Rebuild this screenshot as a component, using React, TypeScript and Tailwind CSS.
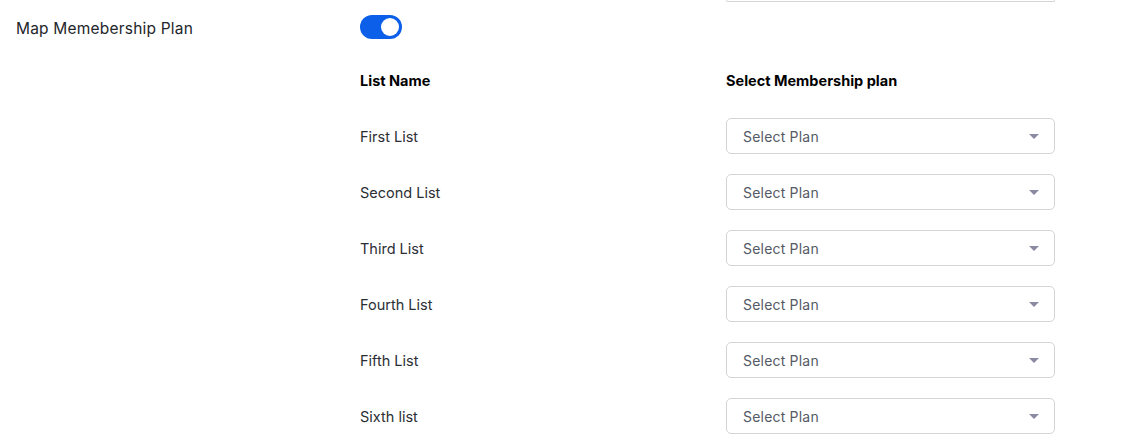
import { useState } from "react";

const lists = [
  "First List",
  "Second List",
  "Third List",
  "Fourth List",
  "Fifth List",
  "Sixth list",
];

const PlanSelect = () => {
  return (
    <div className="flex h-9 w-[329px] items-center justify-between rounded-[5px] border border-[#d4d4d8] bg-white pl-4 pr-[15px]">
      <span className="pt-px text-[14px] tracking-[0.2px] text-[#555a64]">Select Plan</span>
      <svg width="10" height="5" viewBox="0 0 10 5">
        <path d="M0 0 L10 0 L5 5 Z" fill="#8b8aa3" />
      </svg>
    </div>
  );
};

const Toggle = () => {
  const [on, setOn] = useState(true);
  return (
    <button
      onClick={() => setOn(!on)}
      className={`flex h-6 w-[42px] items-center rounded-full px-[3px] ${
        on ? "justify-end bg-[#0b5fe8]" : "justify-start bg-gray-300"
      }`}
    >
      <span className="h-[18px] w-[18px] rounded-full bg-white" />
    </button>
  );
};

export default function App() {
  return (
    <div
      className="h-[444px] w-full overflow-hidden bg-white"
      style={{ fontFamily: "Inter, 'Noto Sans', sans-serif" }}
    >
      <div className="flex pl-[726px]">
        <div className="h-[2px] w-[329px] rounded-b-[5px] border-x border-b border-[#d4d4d8]" />
      </div>
      <div className="mt-[13px] flex h-6 items-start">
        <div className="w-[360px] pl-4 text-[15.5px] leading-[28px] tracking-[0.2px] text-[#23262b]">
          Map Memebership Plan
        </div>
        <Toggle />
      </div>
      <div className="mt-[32px] flex h-5 items-center text-[14.5px] font-bold text-black">
        <div className="w-[726px] pl-[360px]">List Name</div>
        <div>Select Membership plan</div>
      </div>
      <div className="mt-[27px] flex flex-col gap-5">
        {lists.map((name) => (
          <div key={name} className="flex items-center">
            <div className="w-[726px] pl-[360px] pt-px text-[14.5px] text-[#2b2e33]">
              {name}
            </div>
            <PlanSelect />
          </div>
        ))}
      </div>
    </div>
  );
}
